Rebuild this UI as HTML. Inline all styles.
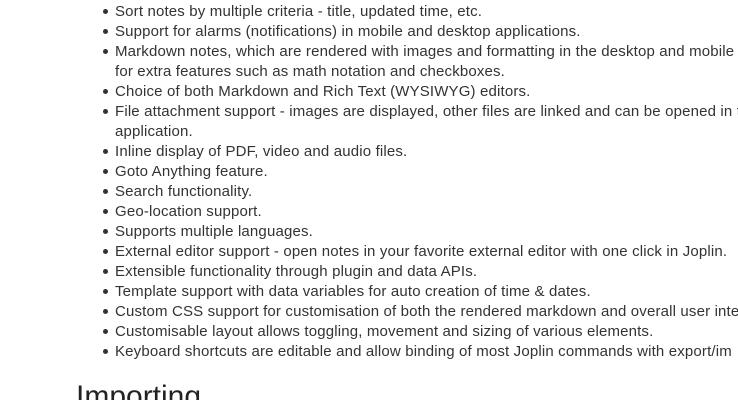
<!DOCTYPE html>
<html><head><meta charset="utf-8"><style>
html,body{margin:0;padding:0;background:#fff;width:738px;height:400px;overflow:hidden}
body{font-family:"Liberation Sans",sans-serif;color:#333;position:relative}
.w{position:absolute;left:0;top:0;width:738px;height:400px;overflow:hidden}
ul{position:absolute;left:0;top:2px;width:623px;margin:0;padding:0 0 0 115px;list-style:none;font-size:15px;letter-spacing:0.16px;line-height:20px}
li{white-space:nowrap;position:relative}
li.b:before{content:"";position:absolute;left:-12px;top:7px;width:5px;height:5px;border-radius:50%;background:#333}
h2{position:absolute;left:76px;top:379px;margin:0;font-size:30px;font-weight:normal;line-height:36px;color:#222}
</style></head><body><div class="w">
<ul>
<li class="b">Sort notes by multiple criteria - title, updated time, etc.</li>
<li class="b">Support for alarms (notifications) in mobile and desktop applications.</li>
<li class="b">Markdown notes, which are rendered with images and formatting in the desktop and mobile</li>
<li>for extra features such as math notation and checkboxes.</li>
<li class="b">Choice of both Markdown and Rich Text (WYSIWYG) editors.</li>
<li class="b">File attachment support - images are displayed, other files are linked and can be opened in th</li>
<li>application.</li>
<li class="b">Inline display of PDF, video and audio files.</li>
<li class="b">Goto Anything feature.</li>
<li class="b">Search functionality.</li>
<li class="b">Geo-location support.</li>
<li class="b">Supports multiple languages.</li>
<li class="b">External editor support - open notes in your favorite external editor with one click in Joplin.</li>
<li class="b">Extensible functionality through plugin and data APIs.</li>
<li class="b">Template support with data variables for auto creation of time &amp; dates.</li>
<li class="b">Custom CSS support for customisation of both the rendered markdown and overall user inter</li>
<li class="b">Customisable layout allows toggling, movement and sizing of various elements.</li>
<li class="b">Keyboard shortcuts are editable and allow binding of most Joplin commands with export/im</li>
</ul>
<h2>Importing</h2>
</div></body></html>
